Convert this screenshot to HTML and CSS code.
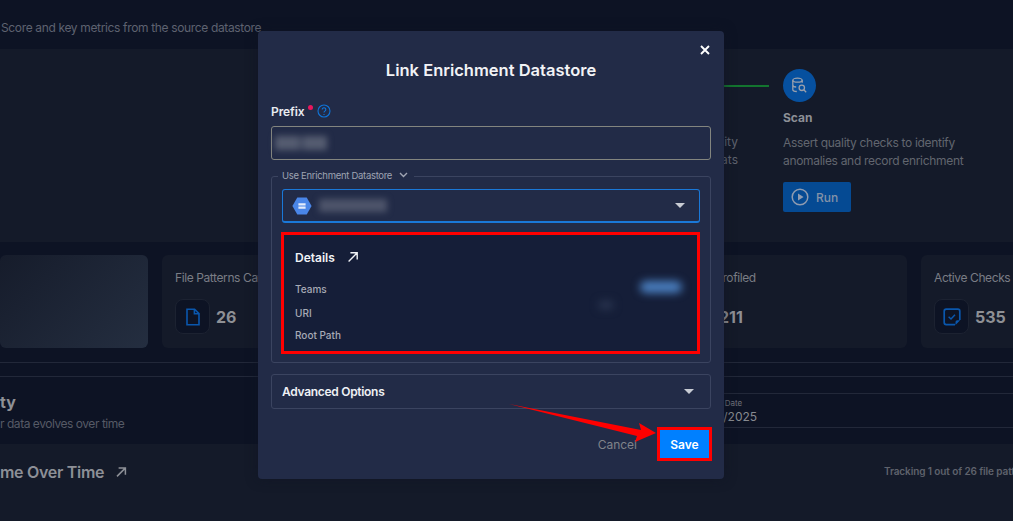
FILE: index.html
```html
<!DOCTYPE html>
<html lang="en">
<head>
<meta charset="utf-8">
<title>Link Enrichment Datastore</title>
<link rel="stylesheet" href="styles.css">
</head>
<body>
<div class="page">
  <header class="head"><p>Score and key metrics from the source datastore</p></header>
  <section class="steps">
    <div class="step-prev">
      <div class="connector"></div>
      <p class="step-text">lity<br>ats</p>
    </div>
    <div class="step">
      <div class="step-icon">
        <svg width="17" height="17" viewBox="0 0 17 17" fill="none" stroke="#9aa0ad" stroke-width="1.3"><ellipse cx="6.5" cy="3.2" rx="4.7" ry="2"/><path d="M1.8 3.2v9.3c0 1.1 2 2 4 2M11.2 3.2v2.5M1.8 8c0 1 1.6 1.9 3.4 2"/><circle cx="10.8" cy="10.8" r="2.7"/><path d="M12.8 12.8l2.4 2.4"/></svg>
      </div>
      <h3>Scan</h3>
      <p class="step-desc">Assert quality checks to identify<br>anomalies and record enrichment</p>
      <button class="run" type="button">
        <svg width="18" height="18" viewBox="0 0 18 18" fill="none"><circle cx="9" cy="9" r="7.8" stroke="#8f9bb0" stroke-width="1.5"/><path d="M7 5.4v7.2L12.6 9z" fill="#8f9bb0"/></svg>
        <span>Run</span>
      </button>
    </div>
  </section>
  <section class="metrics">
    <div class="card card-hero"></div>
    <div class="card card-file">
      <p class="card-label">File Patterns Cataloged</p>
      <div class="card-value">
        <span class="card-icon"><svg width="16" height="18" viewBox="0 0 16 18" fill="none" stroke="#0a57ad" stroke-width="1.6"><path d="M2 1.2h7.6L14 5.6v11.2H2zM9.4 1.2v4.6H14"/></svg></span>
        <strong>26</strong>
      </div>
    </div>
    <div class="card card-profiled">
      <p class="card-label">Fields Profiled</p>
      <div class="card-value"><span class="card-icon"></span><strong>211</strong></div>
    </div>
    <div class="card card-checks">
      <p class="card-label">Active Checks</p>
      <div class="card-value">
        <span class="card-icon"><svg width="18" height="18" viewBox="0 0 18 18" fill="none"><path d="M12 16.6H3.2a2 2 0 0 1-2-2V3.2a2 2 0 0 1 2-2h11.6a2 2 0 0 1 2 2V12" stroke="#0a57ad" stroke-width="1.7"/><path d="M5.6 8.8l2.4 2.2 4-4.2" stroke="#0a57ad" stroke-width="1.5"/><path d="M12.5 17l4.7-4.7h-3a1.7 1.7 0 0 0-1.7 1.7z" fill="#0a57ad"/></svg></span>
        <strong>535</strong>
      </div>
    </div>
  </section>
  <div class="rule-band"></div>
  <section class="activity">
    <div class="activity-title">
      <h2>ty</h2>
      <p>r data evolves over time</p>
    </div>
    <div class="date-field">
      <span class="date-label">End Date</span>
      <span class="date-value">11/12/2025</span>
    </div>
  </section>
  <section class="volume">
    <h2>me Over Time
      <svg width="12" height="12" viewBox="0 0 12 12" fill="none" stroke="#8d9097" stroke-width="1.5"><path d="M2 10.4L10 2.4M3.6 2h6.8v6.8"/></svg>
    </h2>
    <p>Tracking 1 out of 26 file patterns</p>
  </section>

  <div class="modal">
    <button class="close" type="button" aria-label="Close">
      <svg width="10" height="10" viewBox="0 0 10 10" stroke="#fff" stroke-width="1.9"><path d="M1 1l8 8M9 1l-8 8"/></svg>
    </button>
    <h1>Link Enrichment Datastore</h1>
    <div class="field-label">
      <span>Prefix</span><i class="req"></i>
      <svg width="14" height="14" viewBox="0 0 14 14" fill="none" stroke="#0f74d8" stroke-width="1.1"><circle cx="7" cy="7" r="6"/><path d="M5.2 5.5a1.8 1.8 0 1 1 2.7 1.6c-.6.4-.9.7-.9 1.5"/><path d="M7 10v.9"/></svg>
    </div>
    <div class="input"><span class="blur blur-prefix"></span></div>
    <fieldset class="group">
      <legend>Use Enrichment Datastore
        <svg width="9" height="6" viewBox="0 0 9 6" fill="none" stroke="#a0a5b3" stroke-width="1.4"><path d="M1 1l3.5 3.5L8 1"/></svg>
      </legend>
      <div class="select">
        <svg width="20" height="18" viewBox="0 0 20 18"><path d="M5.3 0.5h9.4L19.6 9l-4.9 8.5H5.3L0.4 9z" fill="#4a86e8"/><path d="M6.4 6.2h7.2v2.3H6.4zM6.4 9.5h7.2v2.3H6.4z" fill="#e4ecfb"/></svg>
        <span class="blur blur-name"></span>
        <i class="caret"></i>
      </div>
      <div class="details">
        <div class="details-title">
          <span>Details</span>
          <svg width="12" height="12" viewBox="0 0 12 12" fill="none" stroke="#f1f3f7" stroke-width="1.4"><path d="M1.6 10.4L10 2M3.4 1.8h6.8v6.8"/></svg>
        </div>
        <div class="details-row row-teams"><span>Teams</span><i class="blur blur-team"></i></div>
        <div class="details-row row-uri"><span>URI</span><i class="blur blur-uri"></i></div>
        <div class="details-row row-path"><span>Root Path</span></div>
      </div>
    </fieldset>
    <div class="advanced"><span>Advanced Options</span><i class="caret"></i></div>
    <div class="actions">
      <button class="cancel" type="button">Cancel</button>
      <button class="save" type="button">Save</button>
    </div>
  </div>

  <svg class="arrow" width="160" height="50" viewBox="0 0 160 50"><path d="M0 0L132 26L130 19L147 29L126 38L128 32z" fill="#f00"/></svg>
</div>
</body>
</html>
```

FILE: styles.css
```css
* { box-sizing: border-box; }
html, body { margin: 0; padding: 0; }
body { background: #0d1324; font-family: Inter, "Liberation Sans", sans-serif; }
p, h1, h2, h3 { margin: 0; }
i { display: block; font-style: normal; }
button { font-family: inherit; border: 0; padding: 0; }

.page { position: relative; width: 1013px; height: 521px; overflow: hidden; background: #0d1324; }

.head { height: 49px; padding: 20px 0 0 1px; }
.head p { font-size: 12px; line-height: 15px; color: #5e6270; letter-spacing: -.35px; }

.steps { height: 193px; background: #141a29; display: flex; padding-left: 560px; gap: 14px; }
.step-prev { width: 209px; }
.connector { width: 49px; height: 2px; margin: 36px 0 0 160px; background: #13752f; }
.step-text { width: 178px; margin-top: 46px; text-align: right; font-size: 12px; line-height: 18px; color: #5f636f; }
.step { padding-top: 20px; }
.step-icon { width: 33px; height: 33px; border-radius: 50%; background: #06509f; display: flex; align-items: center; justify-content: center; }
.step h3 { margin-top: 8px; font-size: 12px; line-height: 15px; font-weight: 700; color: #8c8f96; }
.step-desc { margin-top: 9px; font-size: 12px; line-height: 18px; color: #62666f; white-space: nowrap; letter-spacing: -.31px; }
.run { margin-top: 12px; width: 68px; height: 30px; border-radius: 2px; background: #054a93; display: flex; align-items: center; gap: 7px; padding-left: 8px; color: #8392a8; font-size: 12px; font-weight: 500; }

.metrics { display: flex; gap: 14px; padding-top: 13px; height: 106px; }
.card { height: 93px; border-radius: 6px; background: #141a29; padding: 15px 13px 0; flex: none; }
.card-hero { width: 148px; background: linear-gradient(135deg, #161c2b 0%, #242e40 100%); }
.card-file { width: 372px; }
.card-profiled { width: 359px; padding-left: 130px; }
.card-profiled .card-label { margin-left: 3px; }
.card-checks { width: 140px; }
.card-label { font-size: 12px; line-height: 16px; color: #7a7d85; white-space: nowrap; letter-spacing: -.4px; }
.card-value { display: flex; align-items: center; gap: 6px; margin-top: 13px; }
.card-value strong { font-size: 16px; font-weight: 700; color: #8e9095; }
.card-icon { width: 35px; height: 35px; border-radius: 8px; background: #0d1324; border: 1px solid #1c2231; display: flex; align-items: center; justify-content: center; flex: none; }

.rule-band { height: 15px; margin-top: 14px; border-top: 1px solid #222839; border-bottom: 1px solid #222839; }

.activity { height: 67px; display: flex; justify-content: space-between; background: #0d1324; }
.activity-title { padding-top: 15px; }
.activity-title h2 { font-size: 16px; line-height: 20px; font-weight: 700; color: #8e9095; }
.activity-title p { margin-top: 4px; font-size: 12px; line-height: 16px; color: #565a66; letter-spacing: -.46px; }
.date-field { width: 316px; height: 35px; margin-top: 16px; border-top: 1px solid #222839; border-bottom: 1px solid #222839; display: flex; flex-direction: column; padding-top: 4px; }
.date-label { padding-left: 11px; font-size: 8px; line-height: 11px; color: #6e717a; }
.date-value { font-size: 12px; line-height: 15px; color: #878a90; }

.volume { height: 77px; background: #141a29; display: flex; justify-content: space-between; align-items: flex-start; padding-top: 18px; }
.volume h2 { font-size: 16px; line-height: 20px; font-weight: 600; color: #8d9097; letter-spacing: -.3px; display: flex; align-items: center; gap: 11px; }
.volume p { font-size: 10px; line-height: 18px; font-weight: 600; color: #5f626c; white-space: nowrap; width: 129px; letter-spacing: -.1px; }

.modal { position: absolute; left: 258px; top: 31px; width: 466px; height: 448px; padding: 0 13px; background: #222b47; border-radius: 4px; box-shadow: 0 0 12px rgba(15, 20, 35, .6); }
.close { position: absolute; right: 14px; top: 14px; width: 10px; height: 10px; background: none; display: flex; }
.modal h1 { padding-top: 29px; font-size: 16.5px; line-height: 20px; font-weight: 600; color: #f2f3f6; text-align: center; }
.field-label { display: flex; align-items: center; margin-top: 22px; height: 18px; font-size: 12px; font-weight: 600; color: #e9ebf0; letter-spacing: -.1px; }
.req { width: 5px; height: 5px; border-radius: 50%; background: #e8175d; margin: -7px 4px 0 4px; }
.input { margin-top: 6px; height: 34px; border: 1px solid #83857f; border-radius: 3px; display: flex; align-items: center; padding-left: 3px; }
.blur { display: block; filter: blur(3px); }
.blur-prefix { width: 52px; height: 14px; background: linear-gradient(90deg, #555c70 0 44%, #39415a 50%, #555c70 58% 100%); }
.group { margin: 10px 0 0; padding: 7px 10px 10px; height: 193px; border: 1px solid #3b4460; border-radius: 3px; min-width: 0; }
.group legend { padding: 0 6px 0 4px; margin-left: -4px; font-size: 9.5px; line-height: 12px; color: #9ea3b2; letter-spacing: -.3px; }
.group legend svg { margin-left: 5px; vertical-align: 1px; }
.select { height: 34px; border: 1px solid #1a78d8; border-bottom-width: 2px; border-radius: 3px; display: flex; align-items: center; padding: 0 14px 0 9px; }
.select .blur-name { width: 68px; height: 13px; margin-left: 7px; background: #4d546a; }
.caret { margin-left: auto; width: 0; height: 0; border-left: 5px solid transparent; border-right: 5px solid transparent; border-top: 5px solid #c8ccd4; }
.details { position: relative; margin: 9px 0 0 -1px; height: 122px; border: 3px solid #f00; background: #151e38; padding: 0 11px; }
.details-title { display: flex; align-items: center; gap: 12px; height: 18px; margin-top: 13px; font-size: 12px; font-weight: 600; color: #f0f2f6; }
.details-row { display: flex; font-size: 10px; line-height: 14px; font-weight: 500; color: #a7abb6; }
.row-teams { margin-top: 16px; }
.row-uri { margin-top: 10px; }
.row-path { margin-top: 8px; }
.blur-team { position: absolute; right: 15px; top: 46px; width: 42px; height: 12px; border-radius: 6px; background: #4a7fc0; filter: blur(4px); }
.blur-uri { position: absolute; right: 84px; top: 66px; width: 14px; height: 8px; background: #2a3550; filter: blur(4px); }
.advanced { margin-top: 11px; height: 35px; border: 1px solid #3b4460; border-radius: 3px; display: flex; align-items: center; padding: 0 16px 0 10px; font-size: 12px; font-weight: 600; color: #eef0f4; letter-spacing: -.3px; }
.actions { display: flex; justify-content: flex-end; align-items: center; gap: 20px; margin: 18px -1px 0 0; }
.cancel { background: none; font-size: 12px; color: #80838a; }
.save { width: 55px; height: 34px; background: #0080ff; border: 3px solid #f00; color: #fff; font-size: 12px; font-weight: 600; }

.arrow { position: absolute; left: 509px; top: 404px; }
```
